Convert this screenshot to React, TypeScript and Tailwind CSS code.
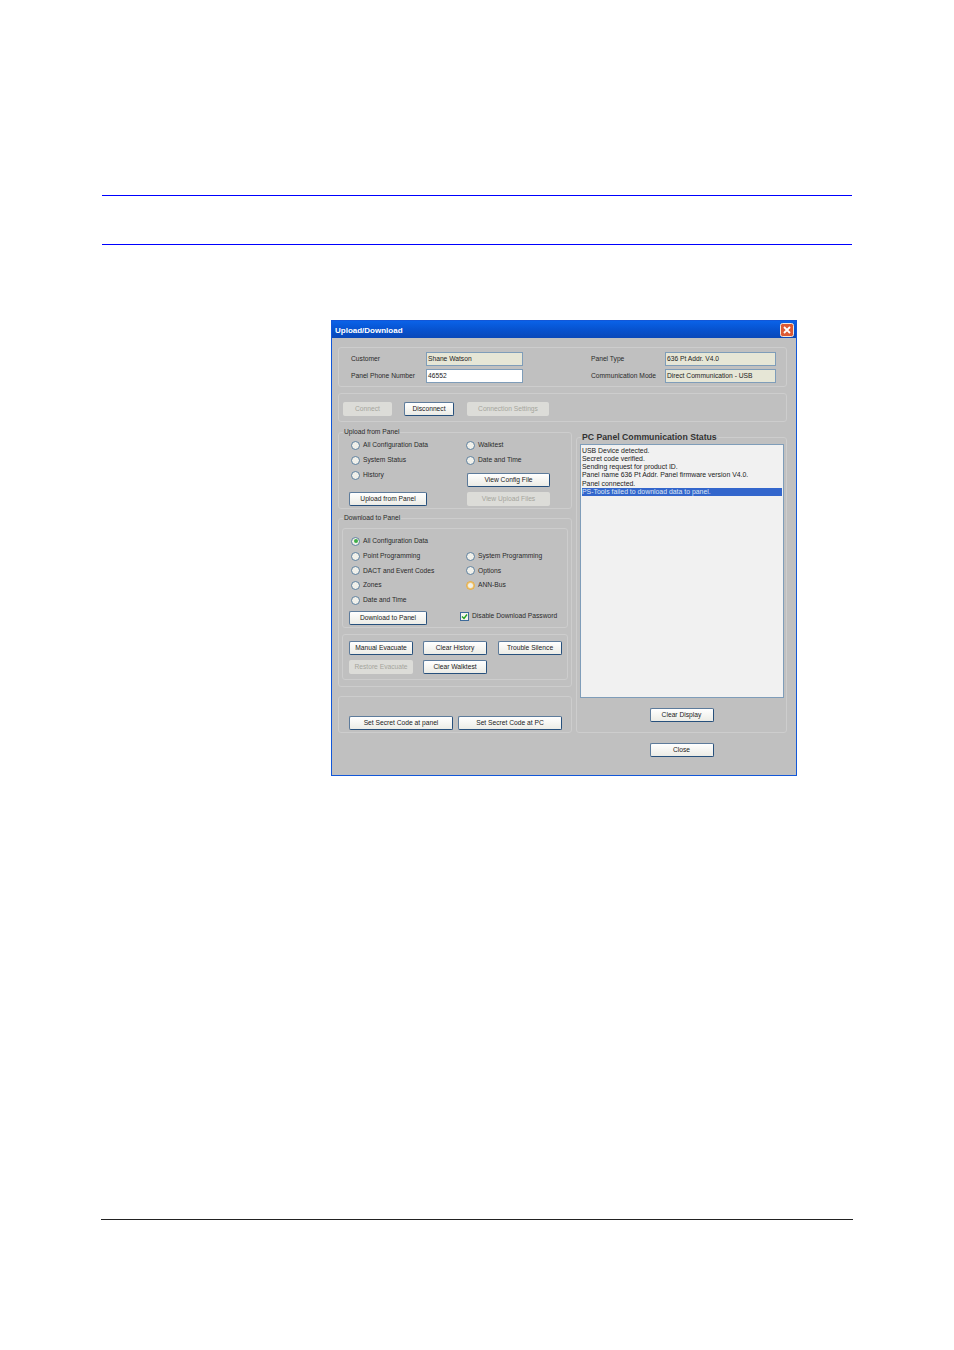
import React from 'react';

const font = "font-['Liberation_Sans',Arial,sans-serif]";

const Btn: React.FC<{ label: string; w: string; disabled?: boolean; className?: string }> = ({ label, w, disabled, className = '' }) => (
  <div
    className={`${w} flex h-[14px] items-center justify-center rounded-[2px] text-[6.7px] leading-none ${
      disabled
        ? 'bg-[#dcdcd8] text-[#a5a59c]'
        : 'border border-[#27507c] border-t-[#5d7b9b] border-l-[#5d7b9b] bg-gradient-to-b from-white to-[#ecece6] text-[#222]'
    } ${className}`}
  >
    {label}
  </div>
);

const Radio: React.FC<{ label?: string; state?: 'on' | 'hover'; h?: string }> = ({ label, state, h = 'h-[15px]' }) => (
  <div className={`flex ${h} items-center gap-[3px] text-[6.7px] leading-none text-[#2a2a2a]`}>
    {label && (
      <>
        <span
          className={`flex h-[9px] w-[9px] shrink-0 items-center justify-center rounded-full border bg-[#f0f0ea] ${
            state === 'hover' ? 'border-[#e2a53a] shadow-[inset_0_0_0_1px_#f3c76c]' : 'border-[#5d7f9e]'
          }`}
        >
          {state === 'on' && <span className="h-[4px] w-[4px] rounded-full bg-[#3fae49]" />}
        </span>
        {label}
      </>
    )}
  </div>
);

const Input: React.FC<{ value: string; w: string; white?: boolean }> = ({ value, w, white }) => (
  <div
    className={`${w} flex h-[14px] items-center border border-[#7f9db9] pl-[1px] text-[6.7px] leading-none text-[#222] ${
      white ? 'bg-white' : 'bg-[#e6e6d6]'
    }`}
  >
    {value}
  </div>
);

const Box: React.FC<{ legend?: string; legendClass?: string; className?: string; children?: React.ReactNode }> = ({
  legend,
  legendClass = 'text-[6.7px] text-[#2a2a2a]',
  className = '',
  children,
}) => (
  <fieldset className={`rounded-[3px] border border-[#cdcdcd] ${className}`}>
    {legend && <legend className={`ml-[4px] px-[1px] leading-[8px] ${legendClass}`}>{legend}</legend>}
    {children}
  </fieldset>
);

const logLines = [
  'USB Device detected.',
  'Secret code verified.',
  'Sending request for product ID.',
  'Panel name 636 Pt Addr. Panel firmware version V4.0.',
  'Panel connected.',
];

const Dialog: React.FC = () => (
  <div className="ml-[331px] h-[456px] w-[466px] border border-[#1257d8] bg-[#c0c0c0]">
    {/* title bar */}
    <div className="flex h-[17px] items-center justify-between bg-gradient-to-b from-[#0a62e8] via-[#0753d0] to-[#0a48b8] pl-[3px] pr-[2px]">
      <span className="pt-[2px] text-[8px] font-bold leading-none text-white">Upload/Download</span>
      <svg width="14" height="14" viewBox="0 0 14 14">
        <rect x="0.5" y="0.5" width="13" height="13" rx="2" fill="#dc5a34" stroke="#f0e8e0" />
        <path d="M4 4l6 6M10 4l-6 6" stroke="#fff" strokeWidth="1.8" />
      </svg>
    </div>

    <div className="flex flex-col pl-[6px] pr-[9px] pt-[9px]">
      <Box className="h-[40px]">
        <div className="flex justify-between pl-[12px] pr-[10px] pt-[4px]">
          <div className="flex flex-col gap-[3px]">
            <div className="flex items-center">
              <span className="w-[75px] text-[6.7px] leading-none text-[#2a2a2a]">Customer</span>
              <Input value="Shane Watson" w="w-[97px]" />
            </div>
            <div className="flex items-center">
              <span className="w-[75px] text-[6.7px] leading-none text-[#2a2a2a]">Panel Phone Number</span>
              <Input value="46552" w="w-[97px]" white />
            </div>
          </div>
          <div className="flex flex-col gap-[3px]">
            <div className="flex items-center">
              <span className="w-[74px] text-[6.7px] leading-none text-[#2a2a2a]">Panel Type</span>
              <Input value="636 Pt Addr. V4.0" w="w-[111px]" />
            </div>
            <div className="flex items-center">
              <span className="w-[74px] text-[6.7px] leading-none text-[#2a2a2a]">Communication Mode</span>
              <Input value="Direct Communication - USB" w="w-[111px]" />
            </div>
          </div>
        </div>
      </Box>

      <Box className="mt-[6px] h-[29px]">
        <div className="flex pl-[4px] pt-[8px]">
          <Btn label="Connect" w="w-[49px]" disabled />
          <Btn label="Disconnect" w="w-[50px]" className="ml-[12px]" />
          <Btn label="Connection Settings" w="w-[82px]" disabled className="ml-[13px]" />
        </div>
      </Box>

      <div className="mt-[6px] flex gap-[4px]">
        <div className="flex w-[234px] flex-col">
          <Box legend="Upload from Panel" className="h-[81px]">
            <div className="flex pl-[10px] pt-[2px]">
              <div className="flex w-[117px] flex-col">
                <div className="pl-[2px]">
                  <Radio label="All Configuration Data" />
                  <Radio label="System Status" />
                  <Radio label="History" />
                </div>
                <Btn label="Upload from Panel" w="w-[78px]" className="mt-[9px]" />
              </div>
              <div className="flex flex-col">
                <div>
                  <Radio label="Walktest" />
                  <Radio label="Date and Time" />
                </div>
                <Btn label="View Config File" w="w-[83px]" className="ml-[1px] mt-[5px]" />
                <Btn label="View Upload Files" w="w-[83px]" disabled className="ml-[1px] mt-[5px]" />
              </div>
            </div>
          </Box>

          <Box legend="Download to Panel" className="mt-[5px] h-[173px]">
            <div className="px-[3px]">
              <Box className="mt-[6px] h-[100px]">
                <div className="grid grid-cols-[115px_1fr] pl-[8px] pt-[5px]">
                  <Radio h="h-[14.8px]" label="All Configuration Data" state="on" />
                  <Radio h="h-[14.8px]" />
                  <Radio h="h-[14.8px]" label="Point Programming" />
                  <Radio h="h-[14.8px]" label="System Programming" />
                  <Radio h="h-[14.8px]" label="DACT and Event Codes" />
                  <Radio h="h-[14.8px]" label="Options" />
                  <Radio h="h-[14.8px]" label="Zones" />
                  <Radio h="h-[14.8px]" label="ANN-Bus" state="hover" />
                  <Radio h="h-[14.8px]" label="Date and Time" />
                  <Radio h="h-[14.8px]" />
                </div>
                <div className="flex items-start pl-[6px] pt-[3px]">
                  <Btn label="Download to Panel" w="w-[78px]" />
                  <div className="ml-[33px] mt-[1px] flex items-center gap-[3px] text-[6.7px] leading-none text-[#2a2a2a]">
                    <span className="flex h-[9px] w-[9px] items-center justify-center border border-[#3d6a9a] bg-[#f4f4ee]">
                      <svg width="7" height="7" viewBox="0 0 7 7">
                        <path d="M1 3.5l2 2 3-4" fill="none" stroke="#21a121" strokeWidth="1.4" />
                      </svg>
                    </span>
                    Disable Download Password
                  </div>
                </div>
              </Box>
              <Box className="mt-[6px] h-[46px]">
                <div className="flex flex-col gap-[5px] pl-[6px] pt-[6px]">
                  <div className="flex">
                    <Btn label="Manual Evacuate" w="w-[64px]" />
                    <Btn label="Clear History" w="w-[64px]" className="ml-[10px]" />
                    <Btn label="Trouble Silence" w="w-[64px]" className="ml-[11px]" />
                  </div>
                  <div className="flex">
                    <Btn label="Restore Evacuate" w="w-[64px]" disabled />
                    <Btn label="Clear Walktest" w="w-[64px]" className="ml-[10px]" />
                  </div>
                </div>
              </Box>
            </div>
          </Box>

          <Box className="mt-[9px] h-[37px]">
            <div className="flex gap-[5px] pl-[10px] pt-[19px]">
              <Btn label="Set Secret Code at panel" w="w-[104px]" />
              <Btn label="Set Secret Code at PC" w="w-[104px]" />
            </div>
          </Box>
        </div>

        <div className="flex w-[211px] flex-col items-center">
          <Box
            legend="PC Panel Communication Status"
            legendClass="text-[8.7px] font-bold text-[#333]"
            className="mt-[5px] h-[300px] w-full"
          >
            <div className="flex flex-col items-center">
              <div className="mt-[3px] h-[254px] w-[204px] border border-[#7f9db9] bg-[#f1f1f1] px-[1px] pt-[1.5px] text-[6.9px] leading-[8.3px] text-[#222]">
                {logLines.map((line) => (
                  <div key={line} className="pl-[0.5px]">{line}</div>
                ))}
                <div className="bg-[#3366cc] pl-[0.5px] text-[#dfe6f5]">PS-Tools failed to download data to panel.</div>
              </div>
              <Btn label="Clear Display" w="w-[64px]" className="mt-[10px]" />
            </div>
          </Box>
          <Btn label="Close" w="w-[64px]" className="mt-[10px]" />
        </div>
      </div>
    </div>
  </div>
);

const App: React.FC = () => (
  <div className={`${font} h-[1350px] w-[954px] bg-white pt-[195px]`}>
    <div className="ml-[102px] h-px w-[750px] bg-[#0000ff]" />
    <div className="ml-[102px] mt-[48px] h-px w-[750px] bg-[#0000ff]" />
    <div className="mt-[75px]">
      <Dialog />
    </div>
    <div className="ml-[101px] mt-[443px] h-px w-[752px] bg-[#222]" />
  </div>
);

export default App;
